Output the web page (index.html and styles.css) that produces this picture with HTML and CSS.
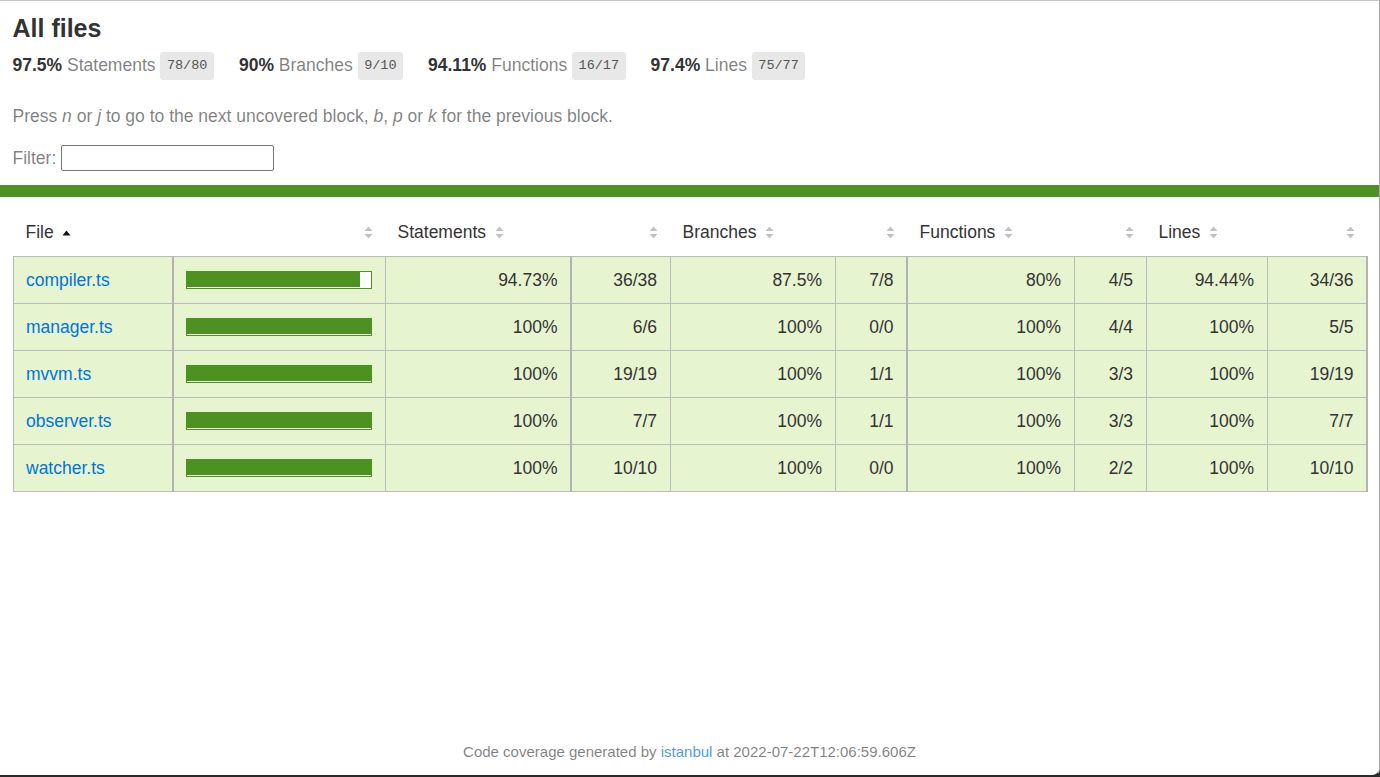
FILE: index.html
```html
<!DOCTYPE html>
<html lang="en">
<head>
<meta charset="utf-8">
<title>Code coverage report for All files</title>
<link rel="stylesheet" href="styles.css">
</head>
<body>
<div class="frame">
  <div class="pad1">
    <h1>All files</h1>
    <div class="summary">
      <div class="group"><span class="strong">97.5%</span> <span class="quiet">Statements</span> <span class="fraction">78/80</span></div>
      <div class="group"><span class="strong">90%</span> <span class="quiet">Branches</span> <span class="fraction">9/10</span></div>
      <div class="group"><span class="strong">94.11%</span> <span class="quiet">Functions</span> <span class="fraction">16/17</span></div>
      <div class="group"><span class="strong">97.4%</span> <span class="quiet">Lines</span> <span class="fraction">75/77</span></div>
    </div>
    <p class="quiet">Press <em>n</em> or <em>j</em> to go to the next uncovered block, <em>b</em>, <em>p</em> or <em>k</em> for the previous block.</p>
    <div class="filter quiet">Filter: <input type="search" class="search"></div>
  </div>
  <div class="status-line"></div>
  <div class="pad1">
    <table class="coverage-summary">
      <colgroup>
        <col class="c-file"><col class="c-pic"><col class="c-spct"><col class="c-sabs"><col class="c-bpct"><col class="c-babs"><col class="c-fpct"><col class="c-fabs"><col class="c-lpct"><col class="c-labs">
      </colgroup>
      <thead>
        <tr>
          <th class="file">File<svg class="sorter" viewBox="0 0 9 13"><polygon class="on" points="0.5,9.5 4.5,4.5 8.5,9.5"/></svg></th>
          <th class="right"><svg class="sorter" viewBox="0 0 9 13"><polygon points="0.5,5 4.5,0.5 8.5,5"/><polygon points="0.5,8 4.5,12.5 8.5,8"/></svg></th>
          <th>Statements<svg class="sorter" viewBox="0 0 9 13"><polygon points="0.5,5 4.5,0.5 8.5,5"/><polygon points="0.5,8 4.5,12.5 8.5,8"/></svg></th>
          <th class="right"><svg class="sorter" viewBox="0 0 9 13"><polygon points="0.5,5 4.5,0.5 8.5,5"/><polygon points="0.5,8 4.5,12.5 8.5,8"/></svg></th>
          <th>Branches<svg class="sorter" viewBox="0 0 9 13"><polygon points="0.5,5 4.5,0.5 8.5,5"/><polygon points="0.5,8 4.5,12.5 8.5,8"/></svg></th>
          <th class="right"><svg class="sorter" viewBox="0 0 9 13"><polygon points="0.5,5 4.5,0.5 8.5,5"/><polygon points="0.5,8 4.5,12.5 8.5,8"/></svg></th>
          <th>Functions<svg class="sorter" viewBox="0 0 9 13"><polygon points="0.5,5 4.5,0.5 8.5,5"/><polygon points="0.5,8 4.5,12.5 8.5,8"/></svg></th>
          <th class="right"><svg class="sorter" viewBox="0 0 9 13"><polygon points="0.5,5 4.5,0.5 8.5,5"/><polygon points="0.5,8 4.5,12.5 8.5,8"/></svg></th>
          <th>Lines<svg class="sorter" viewBox="0 0 9 13"><polygon points="0.5,5 4.5,0.5 8.5,5"/><polygon points="0.5,8 4.5,12.5 8.5,8"/></svg></th>
          <th class="right"><svg class="sorter" viewBox="0 0 9 13"><polygon points="0.5,5 4.5,0.5 8.5,5"/><polygon points="0.5,8 4.5,12.5 8.5,8"/></svg></th>
        </tr>
      </thead>
      <tbody>
        <tr>
          <td class="file thick"><a href="#">compiler.ts</a></td>
          <td class="pic"><div class="chart"><div class="cover-fill" style="width:94%"></div><div class="cover-empty" style="width:6%"></div></div></td>
          <td class="num thick">94.73%</td><td class="num">36/38</td>
          <td class="num">87.5%</td><td class="num thick">7/8</td>
          <td class="num">80%</td><td class="num">4/5</td>
          <td class="num">94.44%</td><td class="num">34/36</td>
        </tr>
        <tr>
          <td class="file thick"><a href="#">manager.ts</a></td>
          <td class="pic"><div class="chart"><div class="cover-fill" style="width:100%"></div></div></td>
          <td class="num thick">100%</td><td class="num">6/6</td>
          <td class="num">100%</td><td class="num thick">0/0</td>
          <td class="num">100%</td><td class="num">4/4</td>
          <td class="num">100%</td><td class="num">5/5</td>
        </tr>
        <tr>
          <td class="file thick"><a href="#">mvvm.ts</a></td>
          <td class="pic"><div class="chart"><div class="cover-fill" style="width:100%"></div></div></td>
          <td class="num thick">100%</td><td class="num">19/19</td>
          <td class="num">100%</td><td class="num thick">1/1</td>
          <td class="num">100%</td><td class="num">3/3</td>
          <td class="num">100%</td><td class="num">19/19</td>
        </tr>
        <tr>
          <td class="file thick"><a href="#">observer.ts</a></td>
          <td class="pic"><div class="chart"><div class="cover-fill" style="width:100%"></div></div></td>
          <td class="num thick">100%</td><td class="num">7/7</td>
          <td class="num">100%</td><td class="num thick">1/1</td>
          <td class="num">100%</td><td class="num">3/3</td>
          <td class="num">100%</td><td class="num">7/7</td>
        </tr>
        <tr>
          <td class="file thick"><a href="#">watcher.ts</a></td>
          <td class="pic"><div class="chart"><div class="cover-fill" style="width:100%"></div></div></td>
          <td class="num thick">100%</td><td class="num">10/10</td>
          <td class="num">100%</td><td class="num thick">0/0</td>
          <td class="num">100%</td><td class="num">2/2</td>
          <td class="num">100%</td><td class="num">10/10</td>
        </tr>
      </tbody>
    </table>
  </div>
  <div class="footer">Code coverage generated by <a href="#">istanbul</a> at 2022-07-22T12:06:59.606Z</div>
</div>
</body>
</html>
```

FILE: styles.css
```css
* { box-sizing: border-box; }
html { background: #2b2b2b; }
body { margin: 0; }

.frame {
  width: 1380px;
  height: 777px;
  display: flex;
  flex-direction: column;
  background: #fff;
  border-top: 1px solid #c6c6c6;
  border-right: 1px solid #a6a6a6;
  border-bottom: 2px solid #2b2b2b;
  border-bottom-right-radius: 8px;
  font-family: "Liberation Sans", Arial, Helvetica, sans-serif;
  font-size: 17.5px;
  color: #333;
}

.pad1 { padding: 12.5px; }

h1 {
  margin: 0;
  font-size: 25px;
  line-height: 28.75px;
  font-weight: bold;
}

.summary { display: flex; }
.group {
  padding: 12.5px 25px 12.5px 0;
  line-height: 20px;
  white-space: nowrap;
}
.strong { font-weight: bold; }
.quiet { color: rgba(0, 0, 0, 0.5); }

.fraction {
  font-family: "Liberation Mono", "DejaVu Sans Mono", monospace;
  font-size: 13.5px;
  color: #555;
  background: #e8e8e8;
  padding: 6px 6.5px 6.5px;
  border-radius: 3px;
  vertical-align: middle;
}

p.quiet {
  margin: 17.5px 0;
  line-height: 20px;
}

.filter {
  display: flex;
  align-items: center;
  height: 29px;
  gap: 5px;
}
.search {
  width: 213px;
  height: 26px;
  margin: 0;
  border: 1px solid #767676;
  border-radius: 2px;
  background: #fff;
  font: inherit;
}

.status-line {
  height: 12px;
  background: rgb(77, 146, 33);
}

.coverage-summary {
  width: 100%;
  table-layout: fixed;
  border-collapse: collapse;
}
.c-file { width: 160px; }
.c-pic { width: 212px; }
.c-spct { width: 186px; }
.c-sabs { width: 99px; }
.c-bpct { width: 165px; }
.c-babs { width: 72px; }
.c-fpct { width: 167px; }
.c-fabs { width: 72px; }
.c-lpct { width: 121px; }
.c-labs { width: 100px; }

.coverage-summary thead tr { border-bottom: 1px solid #bbb; }
.coverage-summary th {
  height: 47px;
  padding: 0 12.5px 1px;
  text-align: left;
  font-weight: normal;
  white-space: nowrap;
  line-height: 20px;
  vertical-align: middle;
}
.coverage-summary th.right { text-align: right; }

.sorter {
  width: 9px;
  height: 13px;
  margin-left: 8.5px;
  vertical-align: -1px;
  fill: #c2c2c2;
}
.sorter .on { fill: #111; }
.coverage-summary th.right .sorter { margin-left: 0; }

.coverage-summary tbody { border: 1px solid #bbb; border-right: 2px solid #b3b3b3; }
.coverage-summary td {
  height: 47px;
  padding: 0 12.5px;
  line-height: 20px;
  vertical-align: middle;
  background: rgb(230, 245, 208);
  border-right: 1px solid #bbb;
  border-bottom: 1px solid #bbb;
  white-space: nowrap;
}
.coverage-summary td.thick { border-right: 2px solid #b3b3b3; }
.coverage-summary td:last-child { border-right: 2px solid #b3b3b3; }
.coverage-summary td.num { text-align: right; }
.coverage-summary td.pic { padding: 0 12.5px 0 12px; }

a { color: #0074d9; text-decoration: none; }

.chart {
  display: flex;
  height: 18px;
  border: 1px solid rgb(77, 146, 33);
  padding-bottom: 1px;
  background: #fbfdf8;
}
.cover-fill { height: 15px; background: rgb(77, 146, 33); }
.cover-empty { height: 15px; background: #fff; }

.footer {
  margin-top: auto;
  padding-bottom: 15px;
  text-align: center;
  font-size: 15px;
  line-height: 17px;
  color: rgba(0, 0, 0, 0.5);
}
.footer a { opacity: 0.7; }
```
